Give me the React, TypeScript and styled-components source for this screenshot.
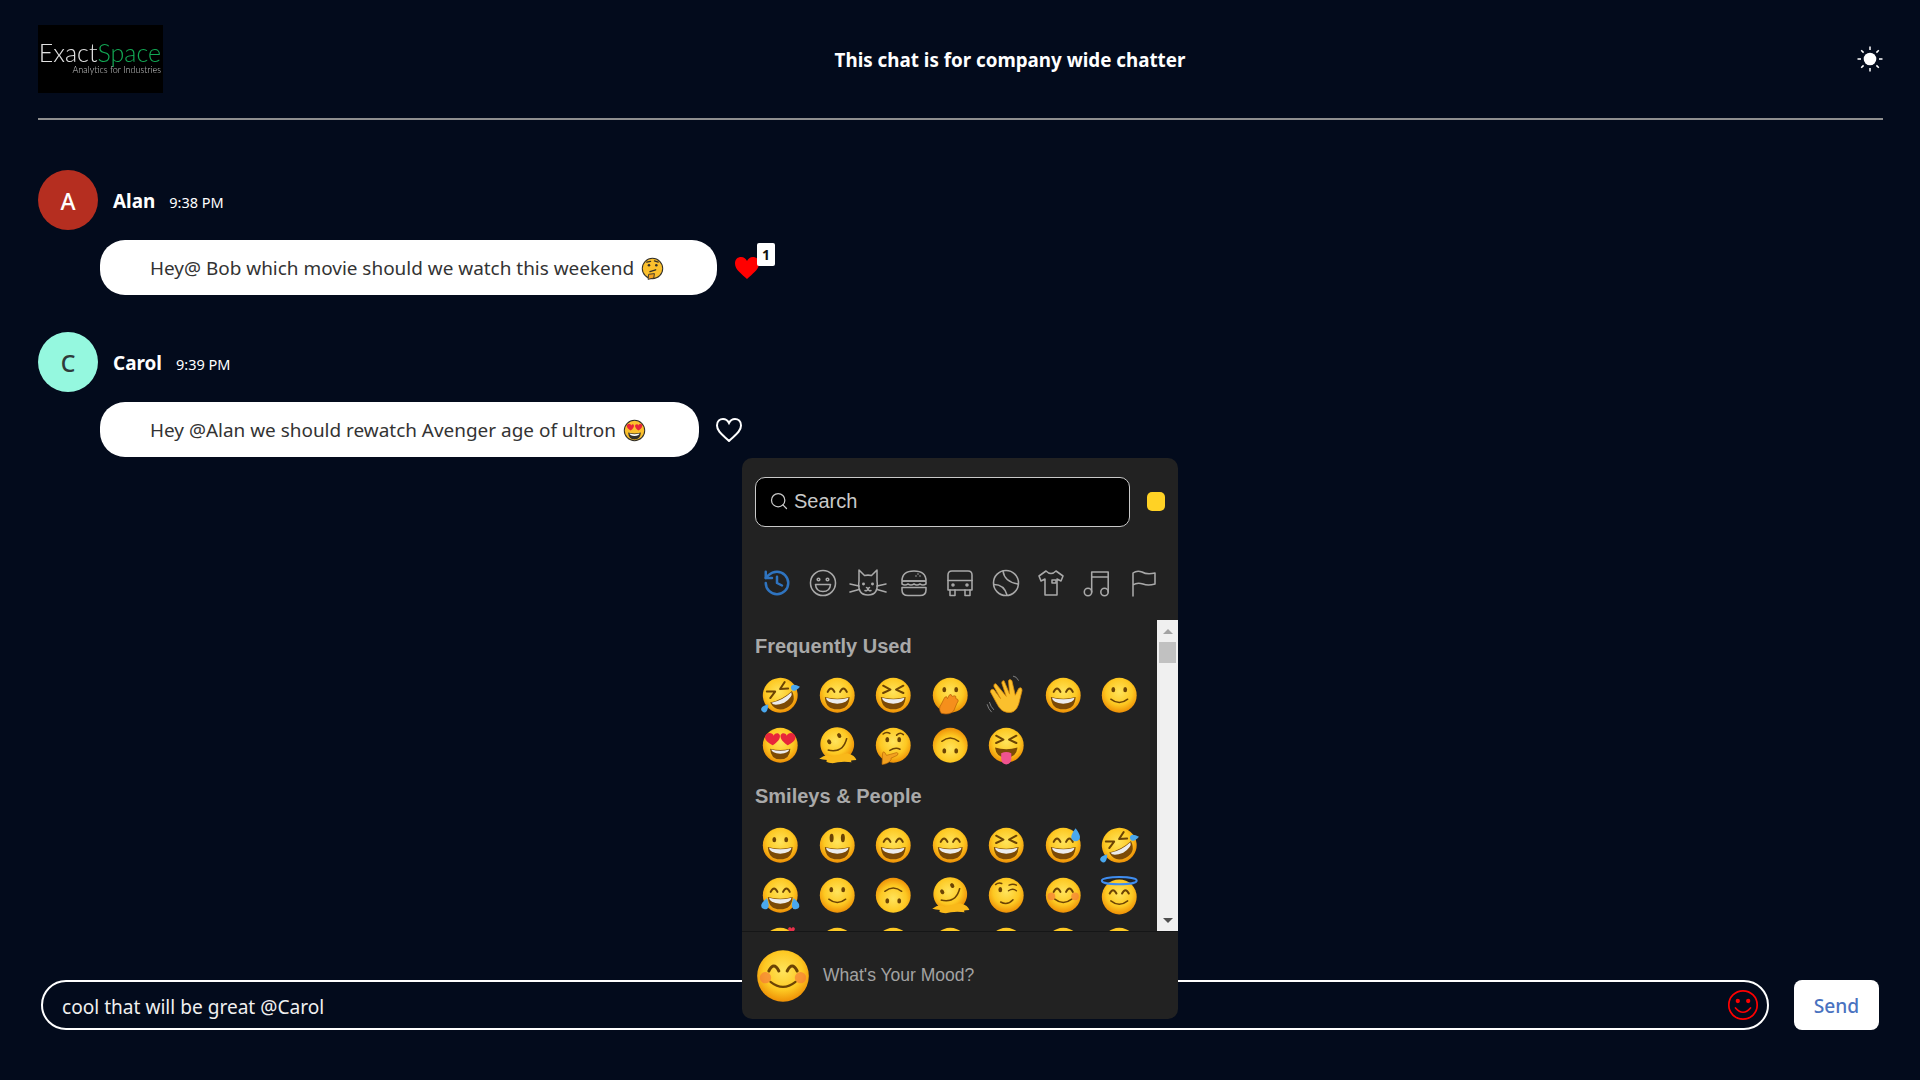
import React from "react";
import styled, { createGlobalStyle } from "styled-components";
import { History, Search } from "lucide-react";

const Global = createGlobalStyle`
  html, body { margin: 0; padding: 0; background: #030b1c; }
  * { box-sizing: border-box; }
`;

const Page = styled.div`
  position: relative;
  width: 1920px;
  height: 1080px;
  overflow: hidden;
  padding: 0 37px 0 38px;
  display: flex;
  flex-direction: column;
  background: #030b1c;
  font-family: "Noto Sans", "Open Sans", sans-serif;
  color: #fff;
`;
const Header = styled.header`
  height: 120px;
  flex: none;
  display: flex;
  align-items: flex-start;
  justify-content: space-between;
  padding-top: 25px;
  border-bottom: 2px solid #8f8f8f;
`;
const Logo = styled.div`
  width: 125px;
  height: 68px;
  background: #000;
  display: flex;
  flex-direction: column;
  align-items: flex-end;
  justify-content: center;
  padding: 0 2px 3px 0;
  font-family: Lato, "Open Sans", sans-serif;
  font-weight: 300;
  filter: blur(0.3px);
`;
const LogoMark = styled.div`
  font-size: 25px;
  line-height: 25px;
  color: #e2e2e2;
  & > span { color: #12a854; }
`;
const LogoTag = styled.div`
  font-size: 9px;
  line-height: 10px;
  color: #cfcfcf;
`;
const Title = styled.div`
  font-size: 18.8px;
  font-weight: 700;
  line-height: 24px;
  margin-top: 23px;
`;
const SunIcon = styled.svg`
  width: 26px;
  height: 26px;
  margin-top: 21px;
`;

const Messages = styled.main`
  display: flex;
  flex-direction: column;
  gap: 37px;
  padding-top: 50px;
`;
const Message = styled.article`
  display: flex;
  flex-direction: column;
  gap: 10px;
`;
const MetaRow = styled.div`
  display: flex;
  align-items: center;
  height: 60px;
`;
const Avatar = styled.div<{ $bg: string; $fg: string }>`
  width: 60px;
  height: 60px;
  border-radius: 50%;
  background: ${(p) => p.$bg};
  color: ${(p) => p.$fg};
  display: flex;
  align-items: center;
  justify-content: center;
  padding-top: 2px;
  font-size: 23px;
  font-weight: 500;
  margin-right: 15px;
`;
const Name = styled.span`
  font-size: 18.9px;
  font-weight: 700;
  margin: 1px 14px 0 0;
`;
const Time = styled.span`
  font-size: 14.5px;
  margin-top: 3px;
`;
const BubbleRow = styled.div`
  display: flex;
  align-items: center;
  gap: 17px;
  margin-left: 62px;
`;
const Bubble = styled.div`
  height: 55px;
  padding: 1px 53px 0 50px;
  background: #fff;
  color: #333;
  border-radius: 25px;
  display: flex;
  align-items: center;
  gap: 7px;
  font-size: 18.95px;
  white-space: nowrap;
`;
const InlineEmoji = styled.svg`
  width: 23px;
  height: 23px;
  flex: none;
`;
const HeartWrap = styled.div`
  position: relative;
  display: flex;
`;
const HeartIcon = styled.svg`
  width: 26px;
  height: 24px;
`;
const Badge = styled.span`
  position: absolute;
  left: 23px;
  top: -13px;
  width: 18px;
  height: 23px;
  background: #fff;
  color: #111;
  border-radius: 2px;
  font-size: 14px;
  font-weight: 700;
  display: flex;
  align-items: center;
  justify-content: center;
`;

const Composer = styled.footer`
  margin-top: auto;
  margin-bottom: 50px;
  padding: 0 4px 0 3px;
  display: flex;
  gap: 25px;
`;
const InputWrap = styled.div`
  flex: 1;
  height: 50px;
  border: 2px solid #fff;
  border-radius: 25px;
  display: flex;
  align-items: center;
  padding: 0 6px 0 19px;
`;
const TextInput = styled.input`
  flex: 1;
  height: 100%;
  padding: 4px 0 0;
  border: 0;
  outline: 0;
  background: transparent;
  color: #f0f0f0;
  font: 400 19.1px "Noto Sans", "Open Sans", sans-serif;
`;
const MoodIcon = styled.svg`
  width: 36px;
  height: 36px;
  flex: none;
  fill: none;
  stroke: #ff0000;
  stroke-width: 1.7;
  stroke-linecap: round;
`;
const SendButton = styled.button`
  width: 85px;
  height: 50px;
  border: 0;
  border-radius: 8px;
  background: #fff;
  color: #4a72c0;
  font: 500 19.2px "Noto Sans", "Open Sans", sans-serif;
`;

const Picker = styled.aside`
  position: absolute;
  left: 742px;
  top: 458px;
  width: 436px;
  height: 561px;
  background: #222;
  border-radius: 10px;
  overflow: hidden;
  display: flex;
  flex-direction: column;
  font-family: "Liberation Sans", Arial, sans-serif;
`;
const SearchRow = styled.div`
  display: flex;
  align-items: center;
  gap: 17px;
  padding: 19px 13px 0;
`;
const SearchBox = styled.div`
  width: 375px;
  height: 50px;
  background: #000;
  border: 1px solid #c9c9c9;
  border-radius: 10px;
  display: flex;
  align-items: center;
  gap: 5px;
  padding: 0 0 2px 13px;
  color: #c9c9c9;
  font-size: 20px;
`;
const Swatch = styled.span`
  width: 18px;
  height: 19px;
  margin-top: -1px;
  border-radius: 5px;
  background: #ffd225;
`;
const Categories = styled.div`
  height: 46px;
  margin: 33px 0 14px;
  padding-left: 12px;
  display: grid;
  grid-template-columns: repeat(9, 45.75px);
  align-items: center;
  justify-items: center;
  color: #a9a9a9;
`;
const CatIcon = styled.svg<{ $wide?: boolean }>`
  width: ${(p) => (p.$wide ? 38 : 28)}px;
  height: 28px;
  fill: none;
  stroke: currentColor;
  stroke-width: 1.55;
  stroke-linecap: round;
  stroke-linejoin: round;
`;
const Body = styled.div`
  flex: 1;
  min-height: 0;
  display: flex;
`;
const EmojiList = styled.div`
  flex: 1;
  min-width: 0;
  overflow: hidden;
  padding: 12px 0 0 13px;
`;
const SectionTitle = styled.h3`
  margin: 0 0 10px;
  height: 28px;
  font-size: 20px;
  line-height: 28px;
  font-weight: 700;
  color: #a9a9a9;
`;
const EmojiGrid = styled.div`
  display: grid;
  grid-template-columns: repeat(7, 56.5px);
  grid-auto-rows: 50px;
  margin: 0 0 12px -3px;
  place-items: center;
`;
const Glyph = styled.svg<{ $size?: number }>`
  width: ${(p) => p.$size ?? 40.5}px;
  height: ${(p) => p.$size ?? 40.5}px;
  flex: none;
`;
const Scrollbar = styled.div`
  width: 21px;
  flex: none;
  background: #f0f0f0;
  display: flex;
  flex-direction: column;
  align-items: center;
  padding-top: 9px;
`;
const ArrowUp = styled.span`
  width: 0;
  height: 0;
  border-left: 5px solid transparent;
  border-right: 5px solid transparent;
  border-bottom: 5px solid #a3a3a3;
`;
const Thumb = styled.span`
  width: 17px;
  height: 21px;
  margin-top: 8px;
  background: #c1c1c1;
`;
const ArrowDown = styled.span`
  width: 0;
  height: 0;
  margin-top: auto;
  margin-bottom: 8px;
  border-left: 5px solid transparent;
  border-right: 5px solid transparent;
  border-top: 5px solid #505050;
`;
const Preview = styled.div`
  height: 88px;
  flex: none;
  border-top: 1px solid #151617;
  display: flex;
  align-items: center;
  gap: 10px;
  padding-left: 11px;
  font-size: 17.5px;
  color: #a3a3a3;
`;
const DefsHolder = styled.svg`
  position: absolute;
  width: 0;
  height: 0;
`;

type Kind =
  | "grinning" | "smiley" | "beaming" | "laughing" | "sweat" | "rofl" | "joy" | "slight" | "upside"
  | "melting" | "wink" | "blush" | "halo" | "hearts" | "thinking" | "oops" | "wave" | "tongue" | "lovely";

const FaceBase = () => <circle cx="18" cy="18" r="15.5" fill="url(#faceGrad)" />;
const Mouth = () => (
  <>
    <path d="M7 19.5Q18 22.5 29 19.5Q28.5 30.5 18 30.5Q7.5 30.5 7 19.5Z" fill="#7c4a05" />
    <path d="M8 20.2Q18 23 28 20.2Q27.7 24.5 18 25.5Q8.3 24.5 8 20.2Z" fill="#ececec" />
  </>
);
const Smile2 = () => <path d="M10.5 21.5Q18 27.5 25.5 21.5" fill="none" stroke="#6b4304" strokeWidth="1.3" strokeLinecap="round" />;
const DotEyes = () => (
  <>
    <ellipse cx="12.7" cy="13" rx="1.7" ry="2.3" fill="#6b4304" />
    <ellipse cx="23.3" cy="13" rx="1.7" ry="2.3" fill="#6b4304" />
  </>
);
const TallEyes = () => (
  <>
    <ellipse cx="13" cy="11.5" rx="1.8" ry="3.8" fill="#6b4304" />
    <ellipse cx="23" cy="11.5" rx="1.8" ry="3.8" fill="#6b4304" />
  </>
);
const ArcEyes = () => (
  <path d="M9.5 15Q12.5 9 15.5 15M20.5 15Q23.5 9 26.5 15" fill="none" stroke="#6b4304" strokeWidth="1.8" strokeLinecap="round" />
);
const CrossEyes = () => (
  <path d="M9 9.5L15.5 13L9 16M27 9.5L20.5 13L27 16" fill="none" stroke="#6b4304" strokeWidth="1.8" strokeLinecap="round" strokeLinejoin="round" />
);
const Drop = ({ x, y, s = 1, r = 0 }: { x: number; y: number; s?: number; r?: number }) => (
  <path transform={`translate(${x} ${y}) rotate(${r}) scale(${s})`} d="M0 -4Q3 0 3 2A3 3 0 0 1 -3 2Q-3 0 0 -4Z" fill="#4aa8ee" />
);

const renderFace = (kind: Kind) => {
  switch (kind) {
    case "grinning":
      return <><FaceBase /><DotEyes /><Mouth /></>;
    case "smiley":
      return <><FaceBase /><TallEyes /><Mouth /></>;
    case "beaming":
      return <><FaceBase /><ArcEyes /><Mouth /></>;
    case "laughing":
      return <><FaceBase /><CrossEyes /><Mouth /></>;
    case "sweat":
      return <><FaceBase /><ArcEyes /><Mouth /><Drop x={29} y={8} s={1.3} /></>;
    case "rofl":
      return (
        <>
          <g transform="rotate(-28 18 18)"><FaceBase /><CrossEyes /><Mouth /></g>
          <Drop x={5} y={29} r={40} s={0.9} />
          <Drop x={32} y={11} r={80} s={0.9} />
        </>
      );
    case "joy":
      return <><FaceBase /><ArcEyes /><Mouth /><Drop x={5} y={25} r={15} s={1.1} /><Drop x={31} y={25} r={-15} s={1.1} /></>;
    case "slight":
      return <><FaceBase /><DotEyes /><Smile2 /></>;
    case "upside":
      return <g transform="rotate(180 18 18)"><FaceBase /><DotEyes /><Smile2 /></g>;
    case "melting":
      return (
        <>
          <g transform="rotate(-32 18 17)">
            <circle cx="18" cy="17" r="15" fill="url(#faceGrad)" />
            <ellipse cx="13" cy="11.5" rx="1.7" ry="2.3" fill="#6b4304" />
            <ellipse cx="23.5" cy="11.5" rx="1.7" ry="2.3" fill="#6b4304" />
            <path d="M8 17Q18 27 28 17" fill="none" stroke="#6b4304" strokeWidth="1.4" />
          </g>
          <path d="M2 30Q8 25 13 28L27 25Q34 27 35 31Q28 31 31 33Q20 32 14 34Q6 33 9 31Q5 31 2 30Z" fill="#f9b91a" />
        </>
      );
    case "wink":
      return (
        <>
          <FaceBase />
          <ellipse cx="12.7" cy="13" rx="1.7" ry="2.3" fill="#6b4304" />
          <path d="M8.5 8.5Q11 6.5 14 7.5M20 14Q24 11.5 27 14M20.5 9Q24 7.5 27 9" fill="none" stroke="#6b4304" strokeWidth="1.3" strokeLinecap="round" />
          <path d="M13 24Q19 27.5 24 22" fill="none" stroke="#6b4304" strokeWidth="1.3" strokeLinecap="round" />
        </>
      );
    case "blush":
      return (
        <>
          <FaceBase />
          <circle cx="7.5" cy="19" r="3.4" fill="#f5793a" opacity=".65" />
          <circle cx="28.5" cy="19" r="3.4" fill="#f5793a" opacity=".65" />
          <ArcEyes />
          <Smile2 />
        </>
      );
    case "lovely":
      return (
        <>
          <FaceBase />
          <ArcEyes />
          <Smile2 />
          <path d="M25 3.5C25 1.5 28 1.5 28 3.5C28 1.5 31 1.5 31 3.5C31 5.5 28 7 28 7.5C28 7 25 5.5 25 3.5Z" fill="#e8314a" />
        </>
      );
    case "halo":
      return (
        <>
          <g transform="translate(0 1.5)"><FaceBase /><ArcEyes /><Smile2 /></g>
          <ellipse cx="18" cy="5" rx="15.5" ry="3.2" fill="none" stroke="#3f8df0" strokeWidth="1.8" />
        </>
      );
    case "hearts":
      return (
        <>
          <FaceBase />
          <path d="M4.5 11C4.5 6.5 11 6 12.2 9.5C13.5 6 19 7 17.5 11.5C16.5 14.5 12.5 17 11.5 18C10 17 4.5 14.5 4.5 11Z" fill="#e8253a" />
          <path d="M18.5 11.5C17 7 22.5 6 23.8 9.5C25 6 31.5 6.5 31.5 11C31.5 14.5 26 17 24.5 18C23.5 17 19.5 14.5 18.5 11.5Z" fill="#e8253a" />
          <path d="M9 21Q18 23.5 27 21Q26.5 30.5 18 30.5Q9.5 30.5 9 21Z" fill="#7c4a05" />
          <path d="M10 21.7Q18 24 26 21.7Q25.7 24.8 18 25.5Q10.3 24.8 10 21.7Z" fill="#ececec" />
        </>
      );
    case "thinking":
      return (
        <>
          <FaceBase />
          <DotEyes />
          <path d="M9 8Q12 5.5 15 7.5M21 9Q24 6 27 8.5M15 22.5Q20 19.5 24 21.5" fill="none" stroke="#6b4304" strokeWidth="1.4" strokeLinecap="round" />
          <path d="M8 35L8.5 25Q9 23 10.5 24.5L12 27L21 24.5Q23.5 25 21.5 27L16 29.5L16 31Q13 35 8 35Z" fill="#f2a11f" stroke="#b96a08" strokeWidth=".6" />
        </>
      );
    case "oops":
      return (
        <>
          <FaceBase />
          <DotEyes />
          <path d="M10 34Q7 30 10 26L13 20Q15 18 15.5 21L17 18Q19 16 19.5 19L21.5 18.5Q23.5 18 23 21L24.5 21.5Q26 23 24 25L21 32Q17 36 10 34Z" fill="#f58f1c" stroke="#b45f06" strokeWidth=".6" />
        </>
      );
    case "wave":
      return (
        <>
          <path
            d="M9 8L18 19L14 7Q14 5 16 5L21 17L20 5Q21 3 23 5L26 18L29 12Q32 10 32 14L29 26Q26 35 18 33Q13 32 10 26L4 15Q4 12 7 13L13 21L7 10Q7 7 9 8Z"
            fill="#fbc02d"
            stroke="#d98a0b"
            strokeWidth=".7"
          />
          <path d="M3 24Q4 28 7 31M1 26Q2 30 5 33M24 1Q27 1 29 5" fill="none" stroke="#8a8a8a" strokeWidth=".8" />
        </>
      );
    case "tongue":
      return (
        <>
          <FaceBase />
          <CrossEyes />
          <path d="M8 20Q18 23 28 20Q27 29 18 29Q9 29 8 20Z" fill="#7c4a05" />
          <path d="M13.5 25Q18 23 22.5 25V30Q22 35 18 35Q14 35 13.5 30Z" fill="#f0538f" />
        </>
      );
  }
};

const Emoji = ({ kind, size }: { kind: Kind; size?: number }) => (
  <Glyph $size={size} viewBox="0 0 36 36" role="img" aria-label={kind}>
    {renderFace(kind)}
  </Glyph>
);

const SmileyCat = () => (
  <CatIcon viewBox="0 0 28 28">
    <circle cx="14" cy="14" r="12.5" />
    <circle cx="9.5" cy="10.5" r="1.3" />
    <circle cx="18.5" cy="10.5" r="1.3" />
    <path d="M6.5 15.5H21.5Q21 22.5 14 22.5Q7 22.5 6.5 15.5Z" />
  </CatIcon>
);
const EmojiCat = () => (
  <CatIcon $wide viewBox="0 0 38 28">
    <path d="M10 1L10 12Q8 26 19 26Q30 26 28 12L28 1L22.5 6.5Q19 5.7 15.5 6.5Z" />
    <path d="M1 15L10 17M1 23L10 20.5M37 15L28 17M37 23L28 20.5" />
    <path d="M17.5 18.5L19 19.7L20.5 18.5M16 21.5Q18 22.5 19 20Q20 22.5 22 21.5" />
    <circle cx="14.5" cy="15" r=".7" />
    <circle cx="23.5" cy="15" r=".7" />
  </CatIcon>
);
const EmojiBurger = () => (
  <CatIcon viewBox="0 0 28 28">
    <path d="M2 12Q2 2 14 2Q26 2 26 12Z" />
    <path d="M2 13Q2 12 4 12H24Q26 12 26 13V15Q23 17 20 15Q17 17 14 15Q11 17 8 15Q5 17 2 15Z" />
    <path d="M2 18.5H26M2 18.5V21Q2 26.5 8 26.5H20Q26 26.5 26 21V18.5" />
    <path d="M18 5h.01M20 7h.01M16 7h.01" />
  </CatIcon>
);
const EmojiBus = () => (
  <CatIcon viewBox="0 0 28 28">
    <path d="M2 6Q2 2 6 2H22Q26 2 26 6V21H2Z" />
    <path d="M2 11.5H26M4 21V26.5H9V21M19 21V26.5H24V21" />
    <circle cx="7" cy="16" r="1" />
    <circle cx="21" cy="16" r="1" />
  </CatIcon>
);
const EmojiBall = () => (
  <CatIcon viewBox="0 0 28 28">
    <circle cx="14" cy="14" r="12.5" />
    <path d="M11 2Q12.5 13 26 15M2 15.5Q12 15.5 15 26" />
  </CatIcon>
);
const EmojiShirt = () => (
  <CatIcon viewBox="0 0 28 28">
    <path d="M9 2L2 7L4 12L8 10V26H20V10L24 12L26 7L19 2Q14 7 9 2Z" />
    <path d="M15 11H19V14H15Z" />
  </CatIcon>
);
const EmojiMusic = () => (
  <CatIcon viewBox="0 0 28 28">
    <circle cx="5" cy="23" r="3.7" />
    <circle cx="21.5" cy="23" r="3.7" />
    <path d="M8.7 23V3H25.2V23M8.7 8H25.2" />
  </CatIcon>
);
const EmojiFlag = () => (
  <CatIcon viewBox="0 0 28 28">
    <path d="M4 27V4Q8 1 13 3Q18 6 26 4V15Q19 17 14 15Q8 13 4 16" />
  </CatIcon>
);

const frequent: Kind[] = ["rofl", "beaming", "laughing", "oops", "wave", "beaming", "slight", "hearts", "melting", "thinking", "upside", "tongue"];
const smileys: Kind[] = [
  "grinning", "smiley", "beaming", "beaming", "laughing", "sweat", "rofl",
  "joy", "slight", "upside", "melting", "wink", "blush", "halo",
  "lovely", "hearts", "smiley", "grinning", "slight", "blush", "beaming",
];

const RedHeart = "M13 23C8 18 1 14 1 7.5C1 3 4 1 7 1C10 1 12 3 13 5C14 3 16 1 19 1C22 1 25 3 25 7.5C25 14 18 18 13 23Z";

export default function App() {
  return (
    <Page>
      <Global />
      <DefsHolder aria-hidden="true">
        <defs>
          <radialGradient id="faceGrad" cx="50%" cy="40%" r="58%">
            <stop offset="0%" stopColor="#ffe45c" />
            <stop offset="65%" stopColor="#fdc822" />
            <stop offset="100%" stopColor="#ef9408" />
          </radialGradient>
        </defs>
      </DefsHolder>
      <Header>
        <Logo>
          <LogoMark>Exact<span>Space</span></LogoMark>
          <LogoTag>Analytics for Industries</LogoTag>
        </Logo>
        <Title>This chat is for company wide chatter</Title>
        <SunIcon viewBox="0 0 26 26">
          <circle cx="13" cy="13" r="6.3" fill="#fff" />
          <path d="M13 0.5V4M13 22V25.5M0.5 13H4M22 13H25.5M4.2 4.2L6.6 6.6M19.4 19.4L21.8 21.8M4.2 21.8L6.6 19.4M19.4 6.6L21.8 4.2" stroke="#fff" strokeWidth="1.5" />
        </SunIcon>
      </Header>
      <Messages>
        <Message>
          <MetaRow>
            <Avatar $bg="#b52e20" $fg="#fff">A</Avatar>
            <Name>Alan</Name>
            <Time>9:38 PM</Time>
          </MetaRow>
          <BubbleRow>
            <Bubble>
              Hey@ Bob which movie should we watch this weekend
              <InlineEmoji viewBox="0 0 36 36">
                <circle cx="18" cy="18" r="16" fill="#fbc02d" stroke="#33302a" strokeWidth="1.6" />
                <circle cx="12.5" cy="13" r="2" fill="#33302a" />
                <circle cx="24" cy="13" r="2" fill="#33302a" />
                <path d="M9 8L15 7M21 6L27 8M14 23L23 20" fill="none" stroke="#33302a" strokeWidth="2" strokeLinecap="round" />
                <path d="M11 35L12 27L21 26L20 33Z" fill="#f2a11f" stroke="#33302a" strokeWidth="1.4" />
              </InlineEmoji>
            </Bubble>
            <HeartWrap>
              <HeartIcon viewBox="0 0 26 24"><path d={RedHeart} fill="#ff0000" /></HeartIcon>
              <Badge>1</Badge>
            </HeartWrap>
          </BubbleRow>
        </Message>
        <Message>
          <MetaRow>
            <Avatar $bg="#95f8df" $fg="#2f3a3a">C</Avatar>
            <Name>Carol</Name>
            <Time>9:39 PM</Time>
          </MetaRow>
          <BubbleRow>
            <Bubble>
              Hey @Alan we should rewatch Avenger age of ultron
              <InlineEmoji viewBox="0 0 36 36">
                <circle cx="18" cy="18" r="16" fill="#fbc02d" stroke="#33302a" strokeWidth="1.6" />
                <path d="M6 11C6 7 12 7 13 10C14 7 18 8 17 12C16 15 13 17 12 18C10 17 6 14 6 11Z" fill="#e8253a" />
                <path d="M19 12C18 8 23 7 24 10C25 7 31 7 30 11C30 14 26 17 24.5 18C23 17 20 15 19 12Z" fill="#e8253a" />
                <path d="M8 21Q18 24 28 21Q27 32 18 32Q9 32 8 21Z" fill="#33302a" />
                <path d="M10 22.5Q18 25 26 22.5Q25 26 18 26.5Q11 26 10 22.5Z" fill="#fff" />
              </InlineEmoji>
            </Bubble>
            <HeartWrap>
              <HeartIcon viewBox="0 0 26 24"><path d={RedHeart} fill="none" stroke="#fff" strokeWidth="2" /></HeartIcon>
            </HeartWrap>
          </BubbleRow>
        </Message>
      </Messages>
      <Composer>
        <InputWrap>
          <TextInput defaultValue="cool that will be great @Carol" />
          <MoodIcon viewBox="0 0 36 36">
            <circle cx="18" cy="18" r="14.2" />
            <path d="M10.5 21Q18 29.5 25.5 21" />
            <circle cx="12.8" cy="14" r="1.3" fill="#ff0000" />
            <circle cx="23.2" cy="14" r="1.3" fill="#ff0000" />
          </MoodIcon>
        </InputWrap>
        <SendButton>Send</SendButton>
      </Composer>
      <Picker>
        <SearchRow>
          <SearchBox>
            <Search size={20} strokeWidth={1.5} />
            Search
          </SearchBox>
          <Swatch />
        </SearchRow>
        <Categories>
          <History size={30} color="#2f74c0" strokeWidth={2} />
          <SmileyCat />
          <EmojiCat />
          <EmojiBurger />
          <EmojiBus />
          <EmojiBall />
          <EmojiShirt />
          <EmojiMusic />
          <EmojiFlag />
        </Categories>
        <Body>
          <EmojiList>
            <SectionTitle>Frequently Used</SectionTitle>
            <EmojiGrid>
              {frequent.map((k, i) => <Emoji key={i} kind={k} />)}
            </EmojiGrid>
            <SectionTitle>Smileys &amp; People</SectionTitle>
            <EmojiGrid>
              {smileys.map((k, i) => <Emoji key={i} kind={k} />)}
            </EmojiGrid>
          </EmojiList>
          <Scrollbar>
            <ArrowUp />
            <Thumb />
            <ArrowDown />
          </Scrollbar>
        </Body>
        <Preview>
          <Emoji kind="blush" size={60} />
          What's Your Mood?
        </Preview>
      </Picker>
    </Page>
  );
}
